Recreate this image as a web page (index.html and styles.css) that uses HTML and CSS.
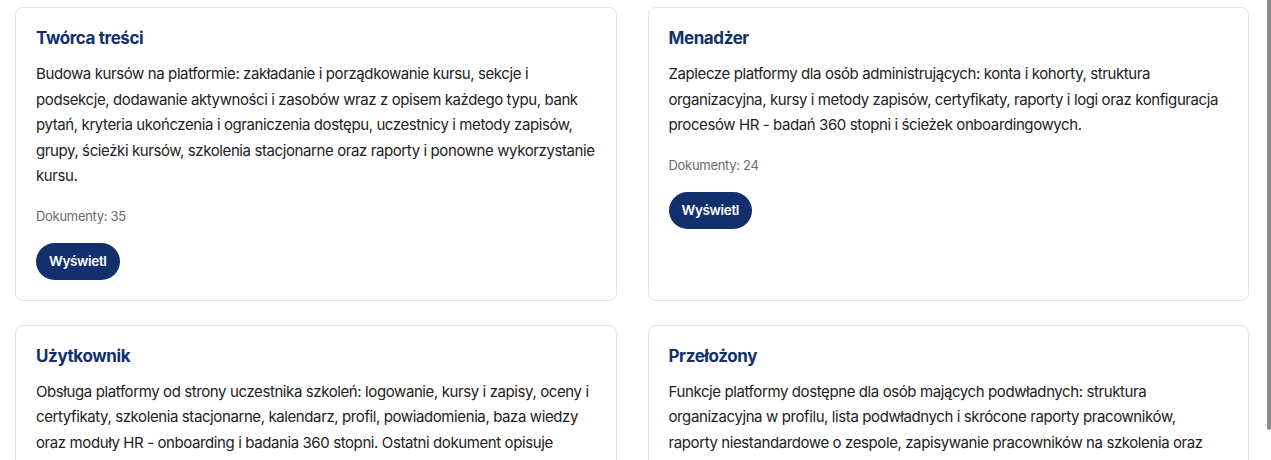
FILE: index.html
```html
<!DOCTYPE html>
<html lang="pl">
<head>
    <meta charset="UTF-8">
    <meta name="viewport" content="width=device-width, initial-scale=1.0">
    <title>Dokumentacja platformy</title>
    <link rel="stylesheet" href="styles.css">
</head>
<body>
    <div class="roles">
        <div class="role-card">
            <h2>Twórca treści</h2>
            <p class="role-desc">Budowa kursów na platformie: zakładanie i porządkowanie kursu, sekcje i podsekcje, dodawanie aktywności i zasobów wraz z opisem każdego typu, bank pytań, kryteria ukończenia i ograniczenia dostępu, uczestnicy i metody zapisów, grupy, ścieżki kursów, szkolenia stacjonarne oraz raporty i ponowne wykorzystanie kursu.</p>
            <div class="role-meta">Dokumenty: 35</div>
            <button class="btn">Wyświetl</button>
        </div>

        <div class="role-card">
            <h2>Menadżer</h2>
            <p class="role-desc">Zaplecze platformy dla osób administrujących: konta i kohorty, struktura organizacyjna, kursy i metody zapisów, certyfikaty, raporty i logi oraz konfiguracja procesów HR - badań 360 stopni i ścieżek onboardingowych.</p>
            <div class="role-meta">Dokumenty: 24</div>
            <button class="btn">Wyświetl</button>
        </div>

        <div class="role-card">
            <h2>Użytkownik</h2>
            <p class="role-desc">Obsługa platformy od strony uczestnika szkoleń: logowanie, kursy i zapisy, oceny i certyfikaty, szkolenia stacjonarne, kalendarz, profil, powiadomienia, baza wiedzy oraz moduły HR - onboarding i badania 360 stopni. Ostatni dokument opisuje najczęstsze problemy i sposoby ich rozwiązania.</p>
            <div class="role-meta">Dokumenty: 31</div>
            <button class="btn">Wyświetl</button>
        </div>

        <div class="role-card">
            <h2>Przełożony</h2>
            <p class="role-desc">Funkcje platformy dostępne dla osób mających podwładnych: struktura organizacyjna w profilu, lista podwładnych i skrócone raporty pracowników, raporty niestandardowe o zespole, zapisywanie pracowników na szkolenia oraz akceptacja wniosków.</p>
            <div class="role-meta">Dokumenty: 12</div>
            <button class="btn">Wyświetl</button>
        </div>
    </div>

    <div class="scroll-thumb"></div>
</body>
</html>
```

FILE: styles.css
```css
:root {
    --navy: #13306e;
    --text: #222222;
    --text-light: #6b6b6b;
    --border: #e3e3e3;
    --background: #ffffff;
}

html {
    overflow: hidden;
}

body {
    font-family: Inter, "Noto Sans", sans-serif;
    background: var(--background);
    margin: 0;
    color: var(--text);
    letter-spacing: -0.35px;
}

.roles {
    display: grid;
    grid-template-columns: 1fr 1fr;
    column-gap: 31px;
    row-gap: 24px;
    padding: 7px 22px 20px 15px;
}

.role-card {
    border: 1px solid var(--border);
    border-radius: 8px;
    padding: 20px;
    display: flex;
    flex-direction: column;
    align-items: flex-start;
}

.role-card h2 {
    margin: 0 0 12px 0;
    font-size: 17px;
    line-height: 21px;
    font-weight: 700;
    color: var(--navy);
    letter-spacing: -0.4px;
}

.role-desc {
    margin: 0 0 17px 0;
    font-size: 15px;
    line-height: 25.5px;
    letter-spacing: -0.4px;
}

.role-meta {
    font-size: 13px;
    line-height: 20px;
    color: var(--text-light);
    margin-bottom: 17px;
    letter-spacing: -0.3px;
}

.btn {
    background: var(--navy);
    color: white;
    border: none;
    border-radius: 999px;
    padding: 10px 13px;
    font-family: inherit;
    font-size: 13.5px;
    line-height: 17px;
    font-weight: 600;
    letter-spacing: -0.35px;
    cursor: pointer;
}

.btn:hover {
    opacity: 0.9;
}

.scroll-thumb {
    position: fixed;
    top: 0;
    right: 0;
    width: 4px;
    height: 430px;
    background: #8c8c8c;
    border-radius: 0 0 3px 3px;
}
```
